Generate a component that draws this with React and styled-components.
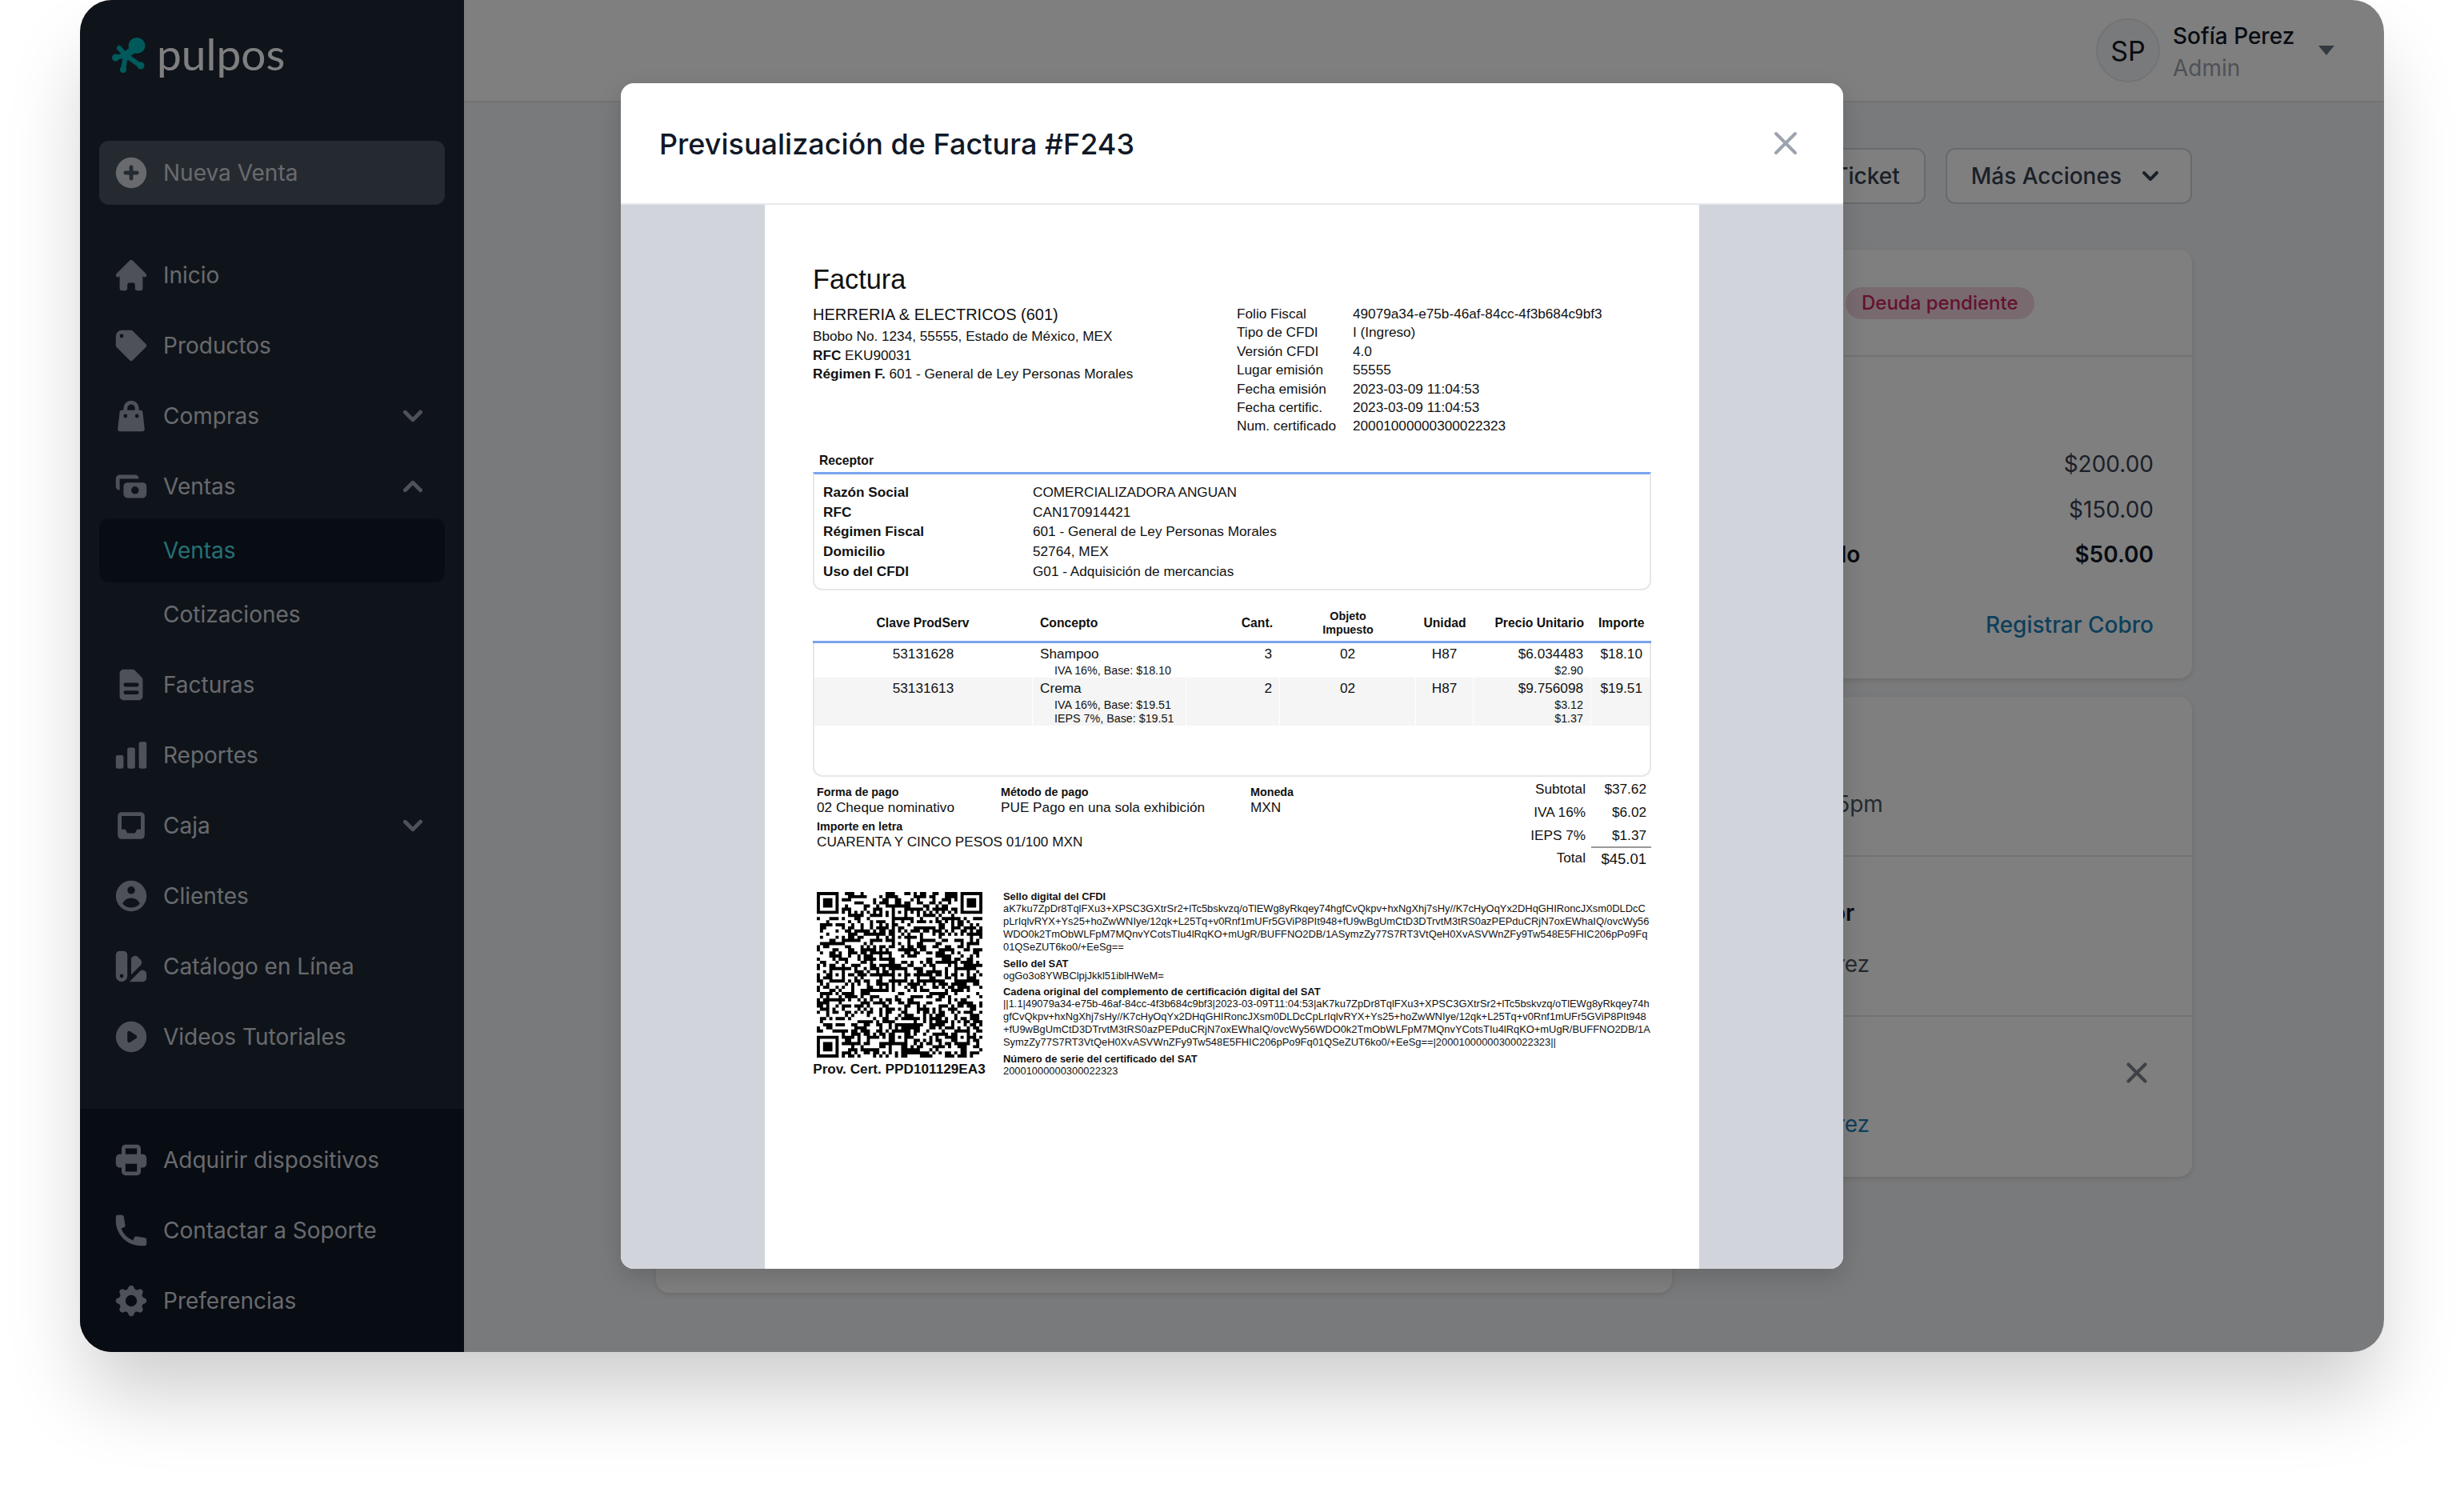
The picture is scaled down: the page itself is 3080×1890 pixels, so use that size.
import { Fragment } from "react"
import styled, { createGlobalStyle } from "styled-components"
import {
  HiPlusCircle, HiHome, HiTag, HiShoppingBag, HiCash, HiDocumentText, HiChartBar, HiInbox,
  HiUserCircle, HiColorSwatch, HiPlay, HiPrinter, HiPhone, HiCog, HiChevronDown, HiChevronUp,
  HiX, HiOutlineX,
} from "react-icons/hi"

const GlobalStyle = createGlobalStyle`
  html, body {
    margin: 0;
    padding: 0;
    background: #fff;
    font-family: "Inter", "Liberation Sans", sans-serif;
  }
  * { box-sizing: border-box; }
`

const Stage = styled.div`
  width: 3080px;
  height: 1890px;
  overflow: hidden;
  background: #fff;
`

const AppWindow = styled.div`
  position: relative;
  display: flex;
  width: 2880px;
  height: 1690px;
  margin-left: 100px;
  border-radius: 40px;
  overflow: hidden;
  box-shadow: 0 60px 100px -10px rgba(0, 0, 0, 0.2);
`

const Sidebar = styled.aside`
  display: flex;
  flex-direction: column;
  flex: 0 0 480px;
  background: #1f2937;
`

const LogoRow = styled.div`
  display: flex;
  align-items: center;
  gap: 14px;
  height: 128px;
  padding: 10px 0 0 40px;
`

const LogoText = styled.span`
  font-family: "Lato", sans-serif;
  font-size: 55px;
  line-height: 56px;
  color: #fff;
  margin-top: -4px;
`

const NewSale = styled.button`
  display: flex;
  align-items: center;
  gap: 16px;
  height: 80px;
  margin: 48px 24px 48px;
  padding: 0 16px;
  border: 0;
  border-radius: 12px;
  background: #4b5563;
  color: #d1d5db;
  font: 400 28px "Inter", sans-serif;
  text-align: left;
  svg { color: #d1d5db; }
`

const Nav = styled.nav`
  display: flex;
  flex-direction: column;
  gap: 8px;
  padding: 0 24px;
`

const NavItem = styled.div`
  display: flex;
  align-items: center;
  gap: 16px;
  height: 80px;
  padding: 0 16px;
  border-radius: 12px;
  color: #d1d5db;
  font-size: 28px;
  svg { flex: 0 0 auto; color: #9ca3af; }
`

const NavLabel = styled.span`
  flex: 1;
`

const SubGroup = styled.div`
  display: flex;
  flex-direction: column;
  margin-top: -8px;
`

const SubItem = styled.div`
  display: flex;
  align-items: center;
  height: 80px;
  padding-left: 80px;
  border-radius: 12px;
  font-size: 28px;
  color: ${(p) => (p.$active ? "#4fdfe6" : "#d1d5db")};
  background: ${(p) => (p.$active ? "#111827" : "transparent")};
`

const SidebarBottom = styled(Nav)`
  margin-top: auto;
  height: 304px;
  padding-top: 24px;
  background: #111827;
`

const Main = styled.main`
  display: flex;
  flex-direction: column;
  flex: 1;
  min-width: 0;
  background: #f3f4f6;
`

const TopBar = styled.header`
  display: flex;
  flex: 0 0 128px;
  align-items: center;
  justify-content: flex-end;
  padding-right: 62px;
  background: #fff;
  border-bottom: 2px solid #e5e7eb;
`

const Avatar = styled.div`
  display: flex;
  align-items: center;
  justify-content: center;
  width: 80px;
  height: 80px;
  margin-right: 16px;
  border: 2px solid #e5e7eb;
  border-radius: 50%;
  background: #f3f4f6;
  color: #111827;
  font-size: 34px;
`

const UserText = styled.div`
  display: flex;
  flex-direction: column;
  gap: 6px;
  width: 182px;
  padding-top: 4px;
`

const UserName = styled.div`
  font-size: 28px;
  line-height: 34px;
  font-weight: 500;
  color: #111827;
`

const UserRole = styled.div`
  font-size: 28px;
  line-height: 34px;
  color: #9ca3af;
`

const Caret = styled.div`
  width: 0;
  height: 0;
  border-left: 10px solid transparent;
  border-right: 10px solid transparent;
  border-top: 12px solid #6b7280;
`

const Content = styled.div`
  width: 1920px;
  margin: 0 auto;
  padding-top: 57px;
`

const Actions = styled.div`
  display: flex;
  justify-content: flex-end;
  gap: 25px;
  margin-bottom: 57px;
`

const OutlineButton = styled.button`
  display: flex;
  align-items: center;
  gap: 16px;
  height: 70px;
  padding: 0 30px;
  border: 2px solid #d1d5db;
  border-radius: 12px;
  background: #fff;
  color: #374151;
  font: 500 28px "Inter", sans-serif;
  white-space: nowrap;
`

const Columns = styled.div`
  display: grid;
  grid-template-columns: 1270px 602px;
  gap: 48px;
`

const Card = styled.section`
  border-radius: 16px;
  background: #fff;
  box-shadow: 0 2px 6px rgba(0, 0, 0, 0.12);
`

const LeftCard = styled(Card)`
  height: 1304px;
`

const RightColumn = styled.div`
  display: flex;
  flex-direction: column;
  gap: 23px;
`

const CardHead = styled.div`
  display: flex;
  align-items: center;
  height: 134px;
  padding: 0 48px;
  border-bottom: 2px solid #e5e7eb;
`

const CardTitle = styled.h3`
  width: 121px;
  margin: 0;
  font-size: 28px;
  font-weight: 600;
  color: #111827;
`

const Pill = styled.span`
  display: flex;
  align-items: center;
  height: 40px;
  margin-top: 1px;
  padding: 0 20px;
  border-radius: 20px;
  background: #f0d4de;
  color: #c9245e;
  font-size: 24px;
  font-weight: 500;
`

const CardBody = styled.div`
  padding: 106px 48px 47px;
`

const AmountRow = styled.div`
  display: flex;
  justify-content: space-between;
  line-height: 56.5px;
  font-size: 28px;
  font-weight: ${(p) => (p.$bold ? 600 : 400)};
  color: ${(p) => (p.$bold ? "#111827" : "#374151")};
`

const LinkRow = styled.div`
  margin-top: 39px;
  line-height: 40px;
  font-size: 28px;
  font-weight: 500;
  text-align: right;
  color: #1c7fb6;
`

const InfoSection = styled.div`
  height: 200px;
  padding: 50px 48px 0;
  border-bottom: ${(p) => (p.$last ? "0" : "2px solid #e5e7eb")};
`

const InfoTitleRow = styled.div`
  display: flex;
  align-items: center;
  justify-content: space-between;
  height: 40px;
  margin-bottom: 24px;
  font-size: 28px;
  font-weight: 600;
  color: #111827;
  svg { color: #7d828c; }
`

const InfoValue = styled.div`
  line-height: 40px;
  font-size: 28px;
  color: ${(p) => (p.$link ? "#1c7fb6" : "#4b5563")};
`

const Overlay = styled.div`
  position: absolute;
  inset: 0;
  background: rgba(0, 0, 0, 0.5);
`

const Modal = styled.div`
  position: absolute;
  left: 676px;
  top: 104px;
  display: flex;
  flex-direction: column;
  width: 1528px;
  height: 1482px;
  border-radius: 16px;
  overflow: hidden;
  background: #fff;
  box-shadow: 0 10px 30px rgba(0, 0, 0, 0.15);
`

const ModalHead = styled.div`
  display: flex;
  flex: 0 0 152px;
  align-items: center;
  justify-content: space-between;
  padding: 0 48px;
  border-bottom: 2px solid #e5e7eb;
  svg { color: #9ca3af; }
`

const ModalTitle = styled.h2`
  margin: 2px 0 0;
  font-size: 36px;
  font-weight: 500;
  color: #111827;
`

const Viewer = styled.div`
  display: flex;
  flex: 1;
  justify-content: center;
  background: #d1d5db;
`

// Invoice page: text sizes are the 12px/10px of the pdf scaled to 1168 wide
const Sheet = styled.div`
  width: 1168px;
  padding: 73px 60px 0;
  background: #fff;
  color: #111;
  font-family: "Liberation Sans", Arial, sans-serif;
  font-size: 17.2px;
`

const SheetTitle = styled.div`
  height: 40px;
  margin-bottom: 11px;
  font-size: 34.3px;
  line-height: 40px;
`

const IssuerRow = styled.div`
  display: grid;
  grid-template-columns: 530px 1fr;
`

const IssuerName = styled.div`
  margin-top: 1px;
  font-size: 20px;
  line-height: 24px;
  margin-bottom: 4px;
`

const IssuerLine = styled.div`
  line-height: 23.7px;
  white-space: nowrap;
`

const FiscalGrid = styled.div`
  display: grid;
  grid-template-columns: 145px 1fr;
  padding-top: 1px;
  line-height: 23.4px;
`

const SectionLabel = styled.div`
  margin: 21px 0 4px 8px;
  font-size: 15.7px;
  font-weight: 700;
  line-height: 20px;
`

const ReceptorBox = styled.div`
  display: grid;
  grid-template-columns: 262px 1fr;
  padding: 10px 11px;
  border: 2px solid #e5e7eb;
  border-top: 3px solid #7aa3ec;
  border-radius: 0 0 12px 12px;
  line-height: 24.7px;
`

const Strong = styled.span`
  font-weight: 700;
`

const TableHead = styled.div`
  display: grid;
  grid-template-columns: 275px 192px 117px 170px 72px 147px 75px;
  align-items: center;
  height: 47px;
  margin-top: 19px;
  border-bottom: 3px solid #7aa3ec;
  font-size: 15.7px;
  font-weight: 700;
`

const HeadCell = styled.div`
  padding: 0 9px;
  text-align: ${(p) => p.$align || "center"};
`

const SmallHead = styled.div`
  margin-top: -1px;
  font-size: 14.3px;
  line-height: 17px;
  text-align: center;
`

const TableBody = styled.div`
  height: 167px;
  border: 2px solid #e5e7eb;
  border-top: 0;
  border-radius: 0 0 12px 12px;
  overflow: hidden;
`

const TableRow = styled.div`
  display: grid;
  grid-template-columns: 273px 192px 117px 170px 72px 147px 73px;
  background: ${(p) => (p.$striped ? "#f5f5f5" : "#fff")};
  min-height: ${(p) => (p.$striped ? "60px" : "43px")};
`

const Cell = styled.div`
  padding: 3px 9px 0;
  line-height: 20px;
  text-align: ${(p) => p.$align || "center"};
  border-right: ${(p) => (p.$last ? "0" : "1px solid #fff")};
`

const TaxLine = styled.div`
  font-size: 14.3px;
  line-height: 17px;
  padding-left: ${(p) => (p.$indent ? "18px" : "0")};
  white-space: nowrap;
  &:first-of-type { margin-top: 3px; }
`

const SheetFooter = styled.div`
  display: flex;
  justify-content: space-between;
`

const PayInfo = styled.div`
  padding: 10px 0 0 5px;
`

const PayGrid = styled.div`
  display: grid;
  grid-template-columns: 230px 312px 120px;
`

const PayLabel = styled.div`
  margin-top: ${(p) => (p.$spaced ? "5px" : "0")};
  font-size: 14.3px;
  font-weight: 700;
  line-height: 18px;
`

const PayValue = styled.div`
  line-height: 20px;
  white-space: nowrap;
`

const Totals = styled.div`
  width: 300px;
  padding-top: 1px;
`

const TotalRow = styled.div`
  display: grid;
  grid-template-columns: 1fr 75px;
  line-height: ${(p) => (p.$total ? "28px" : "28.6px")};
  text-align: right;
`

const TotalLabel = styled.div`
  padding-right: 7px;
`

const TotalValue = styled.div`
  padding-right: 6px;
  font-size: ${(p) => (p.$total ? "18.5px" : "17.2px")};
  border-top: ${(p) => (p.$total ? "2px solid #999" : "0")};
`

const StampRow = styled.div`
  display: flex;
  gap: 22px;
  margin-top: 26px;
`

const QrColumn = styled.div`
  display: flex;
  flex: 0 0 216px;
  flex-direction: column;
  align-items: center;
  padding-top: 1px;
`

const ProvCert = styled.div`
  margin-top: 5px;
  font-size: 17.2px;
  font-weight: 700;
  line-height: 18px;
  white-space: nowrap;
`

const Seals = styled.div`
  font-size: 12.9px;
`

const SealTitle = styled.div`
  margin-top: ${(p) => (p.$first ? "0" : "5.5px")};
  font-weight: 700;
  line-height: 14px;
`

const SealLine = styled.div`
  line-height: 16px;
  white-space: nowrap;
`

const navItems = [
  { icon: HiHome, label: "Inicio" },
  { icon: HiTag, label: "Productos" },
  { icon: HiShoppingBag, label: "Compras", chevron: "down" },
  { icon: HiCash, label: "Ventas", chevron: "up", sub: ["Ventas", "Cotizaciones"] },
  { icon: HiDocumentText, label: "Facturas" },
  { icon: HiChartBar, label: "Reportes" },
  { icon: HiInbox, label: "Caja", chevron: "down" },
  { icon: HiUserCircle, label: "Clientes" },
  { icon: HiColorSwatch, label: "Catálogo en Línea" },
  { icon: HiPlay, label: "Videos Tutoriales" },
]

const bottomItems = [
  { icon: HiPrinter, label: "Adquirir dispositivos" },
  { icon: HiPhone, label: "Contactar a Soporte" },
  { icon: HiCog, label: "Preferencias" },
]

const fiscal = [
  ["Folio Fiscal", "49079a34-e75b-46af-84cc-4f3b684c9bf3"],
  ["Tipo de CFDI", "I (Ingreso)"],
  ["Versión CFDI", "4.0"],
  ["Lugar emisión", "55555"],
  ["Fecha emisión", "2023-03-09 11:04:53"],
  ["Fecha certific.", "2023-03-09 11:04:53"],
  ["Num. certificado", "20001000000300022323"],
]

const receptor = [
  ["Razón Social", "COMERCIALIZADORA ANGUAN"],
  ["RFC", "CAN170914421"],
  ["Régimen Fiscal", "601 - General de Ley Personas Morales"],
  ["Domicilio", "52764, MEX"],
  ["Uso del CFDI", "G01 - Adquisición de mercancias"],
]

const concepts = [
  {
    code: "53131628", name: "Shampoo", qty: "3", price: "$6.034483", amount: "$18.10",
    taxes: [["IVA 16%, Base: $18.10", "$2.90"]],
  },
  {
    code: "53131613", name: "Crema", qty: "2", price: "$9.756098", amount: "$19.51",
    taxes: [["IVA 16%, Base: $19.51", "$3.12"], ["IEPS 7%, Base: $19.51", "$1.37"]],
  },
]

const seals = [
  {
    title: "Sello digital del CFDI",
    lines: [
      "aK7ku7ZpDr8TqlFXu3+XPSC3GXtrSr2+lTc5bskvzq/oTlEWg8yRkqey74hgfCvQkpv+hxNgXhj7sHy//K7cHyOqYx2DHqGHIRoncJXsm0DLDcC",
      "pLrIqlvRYX+Ys25+hoZwWNIye/12qk+L25Tq+v0Rnf1mUFr5GViP8PIt948+fU9wBgUmCtD3DTrvtM3tRS0azPEPduCRjN7oxEWhaIQ/ovcWy56",
      "WDO0k2TmObWLFpM7MQnvYCotsTIu4lRqKO+mUgR/BUFFNO2DB/1ASymzZy77S7RT3VtQeH0XvASVWnZFy9Tw548E5FHIC206pPo9Fq",
      "01QSeZUT6ko0/+EeSg==",
    ],
  },
  { title: "Sello del SAT", lines: ["ogGo3o8YWBClpjJkkl51iblHWeM="] },
  {
    title: "Cadena original del complemento de certificación digital del SAT",
    lines: [
      "||1.1|49079a34-e75b-46af-84cc-4f3b684c9bf3|2023-03-09T11:04:53|aK7ku7ZpDr8TqlFXu3+XPSC3GXtrSr2+lTc5bskvzq/oTlEWg8yRkqey74h",
      "gfCvQkpv+hxNgXhj7sHy//K7cHyOqYx2DHqGHIRoncJXsm0DLDcCpLrIqlvRYX+Ys25+hoZwWNIye/12qk+L25Tq+v0Rnf1mUFr5GViP8PIt948",
      "+fU9wBgUmCtD3DTrvtM3tRS0azPEPduCRjN7oxEWhaIQ/ovcWy56WDO0k2TmObWLFpM7MQnvYCotsTIu4lRqKO+mUgR/BUFFNO2DB/1A",
      "SymzZy77S7RT3VtQeH0XvASVWnZFy9Tw548E5FHIC206pPo9Fq01QSeZUT6ko0/+EeSg==|20001000000300022323||",
    ],
  },
  { title: "Número de serie del certificado del SAT", lines: ["20001000000300022323"] },
]

// builds the qr drawing: finder and alignment squares plus a fixed pseudo random field
const QR_SIZE = 53
const ALIGN_CENTERS = [6, 26, 46]

const buildQrPath = () => {
  let seed = 243
  const next = () => {
    seed = (seed * 1103515245 + 12345) & 0x7fffffff
    return (seed >> 16) & 1
  }
  const origins = [[0, 0], [QR_SIZE - 7, 0], [0, QR_SIZE - 7]]
  const finderAt = (x, y) => origins.find(([ox, oy]) => x >= ox && x < ox + 7 && y >= oy && y < oy + 7)
  const nearFinder = (x, y) => origins.some(([ox, oy]) => x >= ox - 1 && x <= ox + 7 && y >= oy - 1 && y <= oy + 7)
  const alignAt = (x, y) => {
    for (const cy of ALIGN_CENTERS) {
      for (const cx of ALIGN_CENTERS) {
        if (nearFinder(cx, cy)) continue
        if (Math.abs(x - cx) <= 2 && Math.abs(y - cy) <= 2) return [cx, cy]
      }
    }
    return null
  }
  let d = ""
  for (let y = 0; y < QR_SIZE; y++) {
    for (let x = 0; x < QR_SIZE; x++) {
      let on = next() === 1
      const origin = finderAt(x, y)
      const align = alignAt(x, y)
      if (origin) {
        const dx = x - origin[0]
        const dy = y - origin[1]
        on = dx === 0 || dx === 6 || dy === 0 || dy === 6 || (dx >= 2 && dx <= 4 && dy >= 2 && dy <= 4)
      } else if (nearFinder(x, y)) {
        on = false
      } else if (align) {
        const ring = Math.max(Math.abs(x - align[0]), Math.abs(y - align[1]))
        on = ring !== 1
      } else if (y === 6) {
        on = x % 2 === 0
      } else if (x === 6) {
        on = y % 2 === 0
      }
      if (on) d += `M${x} ${y}h1v1h-1z`
    }
  }
  return d
}

const qrPath = buildQrPath()

const QrCode = () => (
  <svg width="207" height="207" viewBox={`0 0 ${QR_SIZE} ${QR_SIZE}`}>
    <path d={qrPath} fill="#000" />
  </svg>
)

const PulposMark = () => (
  <svg width="42" height="44" viewBox="0 0 42 44" fill="none">
    <ellipse cx="31" cy="10" rx="10.5" ry="10" fill="#00b5b8" />
    <path d="M28 14 L17 22" stroke="#00b5b8" strokeWidth="9" strokeLinecap="round" />
    <path d="M17 22 L4 25 M17 22 L14 40 M17 22 L34 34 M17 22 L9 13" stroke="#00b5b8" strokeWidth="6" strokeLinecap="round" />
    <circle cx="4.5" cy="25" r="4.5" fill="#00b5b8" />
    <circle cx="14" cy="40" r="4" fill="#00b5b8" />
    <circle cx="36" cy="35" r="4.5" fill="#00b5b8" />
  </svg>
)

const SideLink = ({ item }) => {
  const Icon = item.icon
  return (
    <NavItem>
      <Icon size={48} />
      <NavLabel>{item.label}</NavLabel>
      {item.chevron === "down" && <HiChevronDown size={48} />}
      {item.chevron === "up" && <HiChevronUp size={48} />}
    </NavItem>
  )
}

const InvoiceSheet = () => (
  <Sheet>
    <SheetTitle>Factura</SheetTitle>
    <IssuerRow>
      <div>
        <IssuerName>HERRERIA &amp; ELECTRICOS (601)</IssuerName>
        <IssuerLine>Bbobo No. 1234, 55555, Estado de México, MEX</IssuerLine>
        <IssuerLine><Strong>RFC</Strong> EKU90031</IssuerLine>
        <IssuerLine><Strong>Régimen F.</Strong> 601 - General de Ley Personas Morales</IssuerLine>
      </div>
      <FiscalGrid>
        {fiscal.map(([label, value]) => (
          <Fragment key={label}>
            <div>{label}</div>
            <div>{value}</div>
          </Fragment>
        ))}
      </FiscalGrid>
    </IssuerRow>

    <SectionLabel>Receptor</SectionLabel>
    <ReceptorBox>
      {receptor.map(([label, value]) => (
        <Fragment key={label}>
          <Strong>{label}</Strong>
          <div>{value}</div>
        </Fragment>
      ))}
    </ReceptorBox>

    <TableHead>
      <HeadCell>Clave ProdServ</HeadCell>
      <HeadCell $align="left">Concepto</HeadCell>
      <HeadCell $align="right">Cant.</HeadCell>
      <SmallHead>Objeto<br />Impuesto</SmallHead>
      <HeadCell>Unidad</HeadCell>
      <HeadCell $align="right">Precio Unitario</HeadCell>
      <HeadCell $align="right">Importe</HeadCell>
    </TableHead>
    <TableBody>
      {concepts.map((row, i) => (
        <TableRow key={row.code} $striped={i % 2 === 1}>
          <Cell>{row.code}</Cell>
          <Cell $align="left">
            {row.name}
            {row.taxes.map((tax) => <TaxLine key={tax[0]} $indent>{tax[0]}</TaxLine>)}
          </Cell>
          <Cell $align="right">{row.qty}</Cell>
          <Cell>02</Cell>
          <Cell>H87</Cell>
          <Cell $align="right">
            {row.price}
            {row.taxes.map((tax) => <TaxLine key={tax[1]}>{tax[1]}</TaxLine>)}
          </Cell>
          <Cell $align="right" $last>{row.amount}</Cell>
        </TableRow>
      ))}
    </TableBody>

    <SheetFooter>
      <PayInfo>
        <PayGrid>
          <PayLabel>Forma de pago</PayLabel>
          <PayLabel>Método de pago</PayLabel>
          <PayLabel>Moneda</PayLabel>
          <PayValue>02 Cheque nominativo</PayValue>
          <PayValue>PUE Pago en una sola exhibición</PayValue>
          <PayValue>MXN</PayValue>
        </PayGrid>
        <PayLabel $spaced>Importe en letra</PayLabel>
        <PayValue>CUARENTA Y CINCO PESOS 01/100 MXN</PayValue>
      </PayInfo>
      <Totals>
        <TotalRow><TotalLabel>Subtotal</TotalLabel><TotalValue>$37.62</TotalValue></TotalRow>
        <TotalRow><TotalLabel>IVA 16%</TotalLabel><TotalValue>$6.02</TotalValue></TotalRow>
        <TotalRow><TotalLabel>IEPS 7%</TotalLabel><TotalValue>$1.37</TotalValue></TotalRow>
        <TotalRow $total><TotalLabel>Total</TotalLabel><TotalValue $total>$45.01</TotalValue></TotalRow>
      </Totals>
    </SheetFooter>

    <StampRow>
      <QrColumn>
        <QrCode />
        <ProvCert>Prov. Cert. PPD101129EA3</ProvCert>
      </QrColumn>
      <Seals>
        {seals.map((seal, i) => (
          <div key={seal.title}>
            <SealTitle $first={i === 0}>{seal.title}</SealTitle>
            {seal.lines.map((line) => <SealLine key={line}>{line}</SealLine>)}
          </div>
        ))}
      </Seals>
    </StampRow>
  </Sheet>
)

const App = () => (
  <Stage>
    <GlobalStyle />
    <AppWindow>
      <Sidebar>
        <LogoRow>
          <PulposMark />
          <LogoText>pulpos</LogoText>
        </LogoRow>
        <NewSale><HiPlusCircle size={48} />Nueva Venta</NewSale>
        <Nav>
          {navItems.map((item) => (
            <Fragment key={item.label}>
              <SideLink item={item} />
              {item.sub && (
                <SubGroup>
                  {item.sub.map((label, i) => <SubItem key={label} $active={i === 0}>{label}</SubItem>)}
                </SubGroup>
              )}
            </Fragment>
          ))}
        </Nav>
        <SidebarBottom as="div">
          {bottomItems.map((item) => <SideLink key={item.label} item={item} />)}
        </SidebarBottom>
      </Sidebar>

      <Main>
        <TopBar>
          <Avatar>SP</Avatar>
          <UserText>
            <UserName>Sofía Perez</UserName>
            <UserRole>Admin</UserRole>
          </UserText>
          <Caret />
        </TopBar>
        <Content>
          <Actions>
            <OutlineButton>Imprimir Ticket</OutlineButton>
            <OutlineButton>Más Acciones <HiChevronDown size={40} /></OutlineButton>
          </Actions>
          <Columns>
            <LeftCard />
            <RightColumn>
              <Card>
                <CardHead>
                  <CardTitle>Pagos</CardTitle>
                  <Pill>Deuda pendiente</Pill>
                </CardHead>
                <CardBody>
                  <AmountRow><span>Total</span><span>$200.00</span></AmountRow>
                  <AmountRow><span>Cobrado</span><span>$150.00</span></AmountRow>
                  <AmountRow $bold><span>Adeudado</span><span>$50.00</span></AmountRow>
                  <LinkRow>Registrar Cobro</LinkRow>
                </CardBody>
              </Card>
              <Card>
                <InfoSection>
                  <InfoTitleRow>Fecha</InfoTitleRow>
                  <InfoValue>Hoy 11:05pm</InfoValue>
                </InfoSection>
                <InfoSection>
                  <InfoTitleRow>Vendedor</InfoTitleRow>
                  <InfoValue>Sofía Perez</InfoValue>
                </InfoSection>
                <InfoSection $last>
                  <InfoTitleRow>Cliente <HiX size={42} /></InfoTitleRow>
                  <InfoValue $link>Sofía Perez</InfoValue>
                </InfoSection>
              </Card>
            </RightColumn>
          </Columns>
        </Content>
      </Main>

      <Overlay />
      <Modal>
        <ModalHead>
          <ModalTitle>Previsualización de Factura #F243</ModalTitle>
          <HiOutlineX size={48} />
        </ModalHead>
        <Viewer>
          <InvoiceSheet />
        </Viewer>
      </Modal>
    </AppWindow>
  </Stage>
)

export default App
